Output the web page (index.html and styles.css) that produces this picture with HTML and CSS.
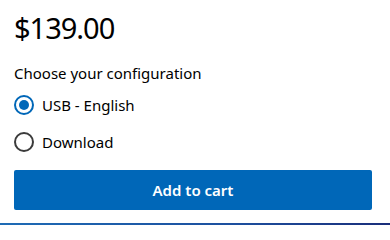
FILE: index.html
```html
<!DOCTYPE html>
<html lang="en">
<head>
<meta charset="utf-8">
<title>Buy</title>
<link rel="stylesheet" href="styles.css">
</head>
<body>
<main class="buybox">
  <div class="price">$139.00</div>
  <fieldset class="config">
    <legend class="config-label">Choose your configuration</legend>
    <label class="option">
      <input type="radio" name="cfg" checked>
      <span class="radio"></span>
      <span class="option-text">USB - English</span>
    </label>
    <label class="option">
      <input type="radio" name="cfg">
      <span class="radio"></span>
      <span class="option-text">Download</span>
    </label>
  </fieldset>
  <button class="cart-btn" type="button">Add to cart</button>
</main>
<div class="rule"></div>
</body>
</html>
```

FILE: styles.css
```css
* { box-sizing: border-box; }
html, body { margin: 0; padding: 0; background: #fff; }
body {
  font-family: "Segoe UI", "Noto Sans", "Open Sans", sans-serif;
  color: #000;
  width: 390px;
  height: 225px;
  display: flex;
  flex-direction: column;
}
.buybox {
  flex: 1;
  padding: 8px 0 0 14px;
  display: flex;
  flex-direction: column;
  align-items: flex-start;
}
.price {
  font-size: 29px;
  line-height: 40px;
  font-weight: 400;
  letter-spacing: -1px;
}
.config {
  border: 0;
  margin: 15px 0 0;
  padding: 0;
  min-width: 0;
}
.config-label {
  padding: 0;
  font-size: 15px;
  line-height: 20px;
  margin-bottom: 8px;
}
.option {
  display: flex;
  align-items: center;
  gap: 8px;
  height: 28px;
  margin-bottom: 9px;
  font-size: 15px;
  cursor: pointer;
}
.option input { display: none; }
.radio {
  width: 20px;
  height: 20px;
  border-radius: 50%;
  border: 2px solid #3b3b3b;
  display: flex;
  align-items: center;
  justify-content: center;
  flex: none;
}
.option input:checked + .radio { border-color: #0067b8; }
.option input:checked + .radio::after {
  content: "";
  width: 10px;
  height: 10px;
  border-radius: 50%;
  background: #0067b8;
}
.cart-btn {
  margin-top: 5px;
  height: 40px;
  width: 358px;
  border: 0;
  border-radius: 2px;
  background: #0067b8;
  color: #fff;
  font-family: inherit;
  font-size: 15px;
  font-weight: 600;
}
.rule {
  height: 2px;
  background: linear-gradient(90deg, #1e6bb5 0%, #1d4f9e 60%, #1a2e7a 100%);
}
```
